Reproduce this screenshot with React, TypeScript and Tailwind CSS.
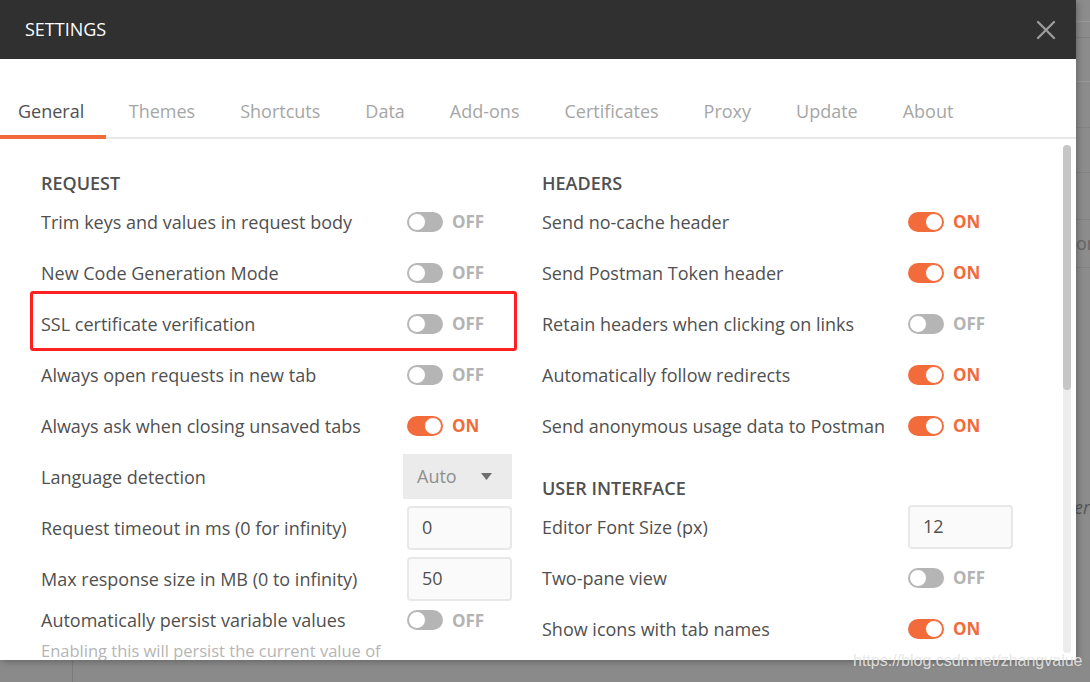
import { useState } from 'react';

type ToggleRow = { kind: 'toggle'; label: string; on: boolean; highlight?: boolean };
type SelectRow = { kind: 'select'; label: string; value: string };
type InputRow = { kind: 'input'; label: string; value: string };
type Row = ToggleRow | SelectRow | InputRow;

const tabs = ['General', 'Themes', 'Shortcuts', 'Data', 'Add-ons', 'Certificates', 'Proxy', 'Update', 'About'];

const requestRows: Row[] = [
  { kind: 'toggle', label: 'Trim keys and values in request body', on: false },
  { kind: 'toggle', label: 'New Code Generation Mode', on: false },
  { kind: 'toggle', label: 'SSL certificate verification', on: false, highlight: true },
  { kind: 'toggle', label: 'Always open requests in new tab', on: false },
  { kind: 'toggle', label: 'Always ask when closing unsaved tabs', on: true },
  { kind: 'select', label: 'Language detection', value: 'Auto' },
  { kind: 'input', label: 'Request timeout in ms (0 for infinity)', value: '0' },
  { kind: 'input', label: 'Max response size in MB (0 to infinity)', value: '50' },
];

const headerRows: Row[] = [
  { kind: 'toggle', label: 'Send no-cache header', on: true },
  { kind: 'toggle', label: 'Send Postman Token header', on: true },
  { kind: 'toggle', label: 'Retain headers when clicking on links', on: false },
  { kind: 'toggle', label: 'Automatically follow redirects', on: true },
  { kind: 'toggle', label: 'Send anonymous usage data to Postman', on: true },
];

const uiRows: Row[] = [
  { kind: 'input', label: 'Editor Font Size (px)', value: '12' },
  { kind: 'toggle', label: 'Two-pane view', on: false },
  { kind: 'toggle', label: 'Show icons with tab names', on: true },
];

function Toggle({ on }: { on: boolean }) {
  return (
    <div className="flex items-center gap-[9px]">
      {on ? (
        <div className="w-[36px] h-[20px] rounded-full bg-[#f26b3a] flex items-center justify-end pr-[1px]">
          <div className="w-[18px] h-[18px] rounded-full bg-white border border-[#f26b3a]" />
        </div>
      ) : (
        <div className="w-[36px] h-[20px] rounded-full bg-[#b5b5b5] flex items-center pl-[1px]">
          <div className="w-[18px] h-[18px] rounded-full bg-white border border-[#b5b5b5]" />
        </div>
      )}
      <span className={`text-[17px] font-bold leading-none ${on ? 'text-[#f26b3a]' : 'text-[#b3b3b3]'}`}>
        {on ? 'ON' : 'OFF'}
      </span>
    </div>
  );
}

function SettingRow({ row }: { row: Row }) {
  return (
    <div className="relative h-[51px] flex items-center">
      {row.kind === 'toggle' && row.highlight && (
        <div className="absolute left-[-11px] top-[-7px] w-[487px] h-[60px] border-[3px] border-[#ff2121] rounded-[3px]" />
      )}
      <div className="w-[366px] text-[18px] text-[#505050] leading-6 whitespace-nowrap">{row.label}</div>
      {row.kind === 'toggle' && <Toggle on={row.on} />}
      {row.kind === 'select' && (
        <div className="-ml-[4px] w-[109px] h-[45px] bg-[#ebebeb] flex items-center justify-between pl-[14px] pr-[20px]">
          <span className="text-[18px] text-[#8f8f8f]">{row.value}</span>
          <svg width="11" height="7" viewBox="0 0 11 7">
            <path d="M0 0 L11 0 L5.5 7 Z" fill="#6e6e6e" />
          </svg>
        </div>
      )}
      {row.kind === 'input' && (
        <div className="w-[105px] h-[44px] rounded-[4px] border-2 border-[#e8e8e8] bg-[#fafafa] flex items-center pl-[13px]">
          <span className="text-[18px] text-[#505050]">{row.value}</span>
        </div>
      )}
    </div>
  );
}

function Heading({ children }: { children: string }) {
  return <div className="h-[25px] leading-[25px] text-[18px] font-semibold text-[#505050]">{children}</div>;
}

export default function App() {
  const [active] = useState('General');

  return (
    <div
      className="relative w-[1090px] h-[682px] overflow-hidden bg-[#8a8a8a]"
      style={{ fontFamily: '"Open Sans", "Noto Sans", sans-serif' }}
    >
      {/* app behind the overlay */}
      <div className="absolute left-[1076px] top-0 w-[14px] h-[660px] bg-[#8c8c8c] overflow-hidden">
        <div className="h-[22px] border-b border-[#9a9a9a]" />
        <div className="h-[16px] border-b border-[#7f7f7f]" />
        <div className="h-[44px] border-b border-[#9a9a9a]" />
        <div className="h-[46px] border-b border-[#838383]" />
        <div className="h-[45px] border-b border-[#838383]" />
        <div className="h-[47px] border-b border-[#838383]" />
        <div className="h-[48px] border-b border-[#838383]" />
        <div className="mt-[-37px] text-[18px] text-[#666] leading-6 whitespace-nowrap">or</div>
        <div className="mt-[240px] -ml-[2px] text-[18px] italic text-[#555] leading-6 whitespace-nowrap">era</div>
      </div>
      <div className="absolute left-[72px] top-[660px] w-px h-[22px] bg-[#7a7a7a]" />

      {/* settings modal */}
      <div className="absolute left-0 top-0 w-[1076px] h-[660px] bg-white flex flex-col overflow-hidden shadow-[2px_2px_6px_rgba(0,0,0,0.25)]">
        <div className="h-[59px] shrink-0 bg-[#303030] flex items-center justify-between pl-[25px] pr-[20px]">
          <span className="text-[18px] font-medium text-white">SETTINGS</span>
          <svg width="20" height="20" viewBox="0 0 20 20">
            <path d="M2 2 L18 18 M18 2 L2 18" stroke="#9b9b9b" strokeWidth="2.4" strokeLinecap="round" />
          </svg>
        </div>

        <div className="h-[80px] shrink-0 border-b-2 border-[#e8e8e8] flex items-end">
          {tabs.map((tab, i) => (
            <div
              key={tab}
              className={`-mb-[2px] pb-[12px] border-b-4 text-[18px] leading-6 ${i === 0 ? 'pl-[18px] pr-[22px]' : 'px-[22.5px]'} ${
                tab === active ? 'border-[#f26b3a] text-[#505050]' : 'border-transparent text-[#a6a6a6]'
              }`}
            >
              {tab}
            </div>
          ))}
        </div>

        <div className="relative flex-1 flex pl-[41px] pt-[32px]">
          <div className="w-[471px] flex flex-col">
            <Heading>REQUEST</Heading>
            {requestRows.map((r) => (
              <SettingRow key={r.label} row={r} />
            ))}
            <div className="h-[32px] flex items-center">
              <div className="w-[366px] text-[18px] text-[#505050] leading-6 whitespace-nowrap">
                Automatically persist variable values
              </div>
              <Toggle on={false} />
            </div>
            <div className="mt-[5px] text-[16.5px] text-[#b5b5b5] leading-5 whitespace-nowrap">
              Enabling this will persist the current value of
            </div>
          </div>

          <div className="ml-[30px] w-[471px] flex flex-col">
            <Heading>HEADERS</Heading>
            {headerRows.map((r) => (
              <SettingRow key={r.label} row={r} />
            ))}
            <div className="mt-[25px]">
              <Heading>USER INTERFACE</Heading>
            </div>
            {uiRows.map((r) => (
              <SettingRow key={r.label} row={r} />
            ))}
          </div>

          <div className="absolute right-[5px] top-[6px] w-[8px] h-[508px] rounded-full bg-[#ececec]">
            <div className="w-full h-[245px] rounded-full bg-[#c6c6c6]" />
          </div>
        </div>
      </div>

      <div
        className="absolute left-[853px] top-[651px] text-[16px] leading-5 text-[#e6e6e6]/90"
        style={{ fontFamily: '"Liberation Sans", Arial, sans-serif' }}
      >
        https://blog.csdn.net/zhangvalue
      </div>
    </div>
  );
}
